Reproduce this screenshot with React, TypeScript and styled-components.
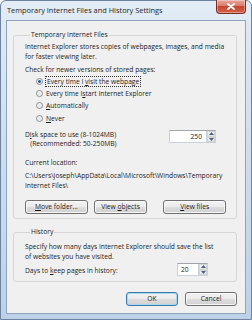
import React from 'react';
import styled, { createGlobalStyle } from 'styled-components';

const Global = createGlobalStyle`
    html, body {
        margin: 0;
        padding: 0;
        background: #ffffff;
    }
    * { box-sizing: border-box; }
`

const Window = styled.div`
    width: 252px;
    height: 320px;
    display: flex;
    flex-direction: column;
    border: 1px solid #6f83a0;
    border-radius: 6px 6px 0 0;
    background: linear-gradient(180deg, #e3ecf6 0%, #d4e2f1 30%, #bcd1e8 100%);
    font-family: "Segoe UI", "Open Sans", "Noto Sans", sans-serif;
    color: #1b1b1b;
`
const TitleBar = styled.div`
    height: 19px;
    display: flex;
    justify-content: space-between;
    align-items: flex-start;
    padding-left: 6px;
`
const Title = styled.div`
    font-size: 7.4px;
    line-height: 19px;
    color: #1e1e1e;
`
const CloseBtn = styled.div`
    width: 30px;
    height: 14px;
    margin-right: 5px;
    margin-top: -1px;
    border: 1px solid #7a2e22;
    border-top: none;
    border-radius: 0 0 4px 4px;
    background: linear-gradient(180deg, #e9a79b 0%, #d77d6c 45%, #c54630 50%, #d4624a 100%);
    display: flex;
    align-items: center;
    justify-content: center;
    box-shadow: inset 0 0 0 1px rgba(255,255,255,0.35);
`
const Client = styled.div`
    flex: 1;
    margin: 0 5px 5px 5px;
    background: #f0f0f0;
    border: 1px solid #8fa3bd;
    padding: 9px 8px 0 6px;
    display: flex;
    flex-direction: column;
`
const Group = styled.fieldset<{ pb: number; mt?: number }>`
    margin: ${p => p.mt || 0}px 0 0 0;
    border: 1px solid #d5d5d5;
    border-radius: 3px;
    padding: 0 10px ${p => p.pb}px 11px;
    min-width: 0;
`
const Legend = styled.legend`
    font-size: 6.7px;
    line-height: 10px;
    padding: 0 1px;
    margin-left: 5px;
`
const Text = styled.div<{ mt?: number; lh?: number }>`
    font-size: 6.7px;
    line-height: ${p => p.lh || 10}px;
    white-space: nowrap;
    margin-top: ${p => p.mt || 0}px;
`
const Radios = styled.div`
    display: flex;
    flex-direction: column;
    margin: 0 0 0 11px;
`
const RadioRow = styled.div`
    display: flex;
    align-items: center;
    height: 12.3px;
    font-size: 6.7px;
    white-space: nowrap;
`
const RadioDot = styled.span<{ checked?: boolean }>`
    width: 7px;
    height: 7px;
    border-radius: 50%;
    border: 1px solid #8a8c8e;
    margin-right: 3px;
    background: ${p => p.checked
        ? 'radial-gradient(circle, #1d4f86 0%, #2f6fb0 35%, #e9eef4 45%, #f7f7f7 100%)'
        : 'radial-gradient(circle, #dfe3e8 0%, #f4f4f4 60%, #ffffff 100%)'};
`
const FocusLabel = styled.span`
    outline: 1px dotted #333;
    padding: 0 1px;
    line-height: 9px;
`
const Row = styled.div<{ mt?: number }>`
    display: flex;
    justify-content: space-between;
    align-items: flex-start;
    margin-top: ${p => p.mt || 0}px;
`
const SpinBox = styled.div<{ w: number; mr: number; mt: number }>`
    width: ${p => p.w}px;
    height: 13px;
    margin-right: ${p => p.mr}px;
    margin-top: ${p => p.mt}px;
    display: flex;
    background: #ffffff;
    border: 1px solid #c9d1da;
    border-top-color: #a3a7ad;
`
const SpinValue = styled.div<{ align: string }>`
    flex: 1;
    font-size: 6.7px;
    line-height: 11px;
    text-align: ${p => p.align};
    padding: 0 4px 0 3px;
`
const SpinArrows = styled.div`
    width: 9px;
    display: flex;
    flex-direction: column;
    border-left: 1px solid #c9d1da;
`
const SpinHalf = styled.div`
    flex: 1;
    display: flex;
    align-items: center;
    justify-content: center;
    background: linear-gradient(180deg, #f6f6f6, #e3e3e3);
    border: 1px solid #d4d4d4;
`
const ButtonRow = styled.div<{ mt: number; justify: string }>`
    display: flex;
    justify-content: ${p => p.justify};
    gap: 6px;
    margin-top: ${p => p.mt}px;
`
const Button = styled.div<{ w: number; ml?: number; primary?: boolean }>`
    width: ${p => p.w}px;
    height: 14px;
    margin-left: ${p => p.ml || 0}px;
    border: 1px solid ${p => p.primary ? '#3d7bad' : '#707070'};
    border-radius: 3px;
    background: linear-gradient(180deg, #f2f2f2 0%, #ebebeb 48%, #dddddd 52%, #cfcfcf 100%);
    box-shadow: inset 0 0 0 1px ${p => p.primary ? '#a7d8f3' : 'rgba(255,255,255,0.8)'};
    font-size: 6.7px;
    line-height: 12px;
    text-align: center;
    white-space: nowrap;
`

const Spin = ({ value, w, mr, mt, align }: { value: string; w: number; mr: number; mt: number; align: string }) => (
    <SpinBox w={w} mr={mr} mt={mt}>
        <SpinValue align={align}>{value}</SpinValue>
        <SpinArrows>
            <SpinHalf>
                <svg width="5" height="3" viewBox="0 0 5 3"><path d="M0 3 L2.5 0 L5 3 Z" fill="#4d6185" /></svg>
            </SpinHalf>
            <SpinHalf>
                <svg width="5" height="3" viewBox="0 0 5 3"><path d="M0 0 L2.5 3 L5 0 Z" fill="#4d6185" /></svg>
            </SpinHalf>
        </SpinArrows>
    </SpinBox>
)

export default function App() {
    return (
        <>
            <Global />
            <Window>
                <TitleBar>
                    <Title>Temporary Internet Files and History Settings</Title>
                    <CloseBtn>
                        <svg width="8" height="7" viewBox="0 0 8 7">
                            <path d="M1 1 L7 6 M7 1 L1 6" stroke="#ffffff" strokeWidth="1.8" strokeLinecap="round" />
                        </svg>
                    </CloseBtn>
                </TitleBar>
                <Client>
                    <Group pb={4}>
                        <Legend>Temporary Internet Files</Legend>
                        <Text mt={2}>Internet Explorer stores copies of webpages, images, and media<br />for faster viewing later.</Text>
                        <Text mt={3}>Check for newer versions of stored pages:</Text>
                        <Radios>
                            <RadioRow><RadioDot checked /><FocusLabel>Every time I <u>v</u>isit the webpage</FocusLabel></RadioRow>
                            <RadioRow><RadioDot />Every time I <u>s</u>tart Internet Explorer</RadioRow>
                            <RadioRow><RadioDot /><u>A</u>utomatically</RadioRow>
                            <RadioRow><RadioDot /><u>N</u>ever</RadioRow>
                        </Radios>
                        <Row mt={6}>
                            <Text lh={9}>D<u>i</u>sk space to use (8-1024MB)<br />&nbsp;&nbsp;&nbsp;(Recommended: 50-250MB)</Text>
                            <Spin value="250" w={47} mr={10} mt={0} align="right" />
                        </Row>
                        <Text mt={10}>Current location:</Text>
                        <Text mt={3}>C:\Users\Joseph\AppData\Local\Microsoft\Windows\Temporary<br />Internet Files\</Text>
                        <ButtonRow mt={9} justify="flex-start">
                            <Button w={63}><u>M</u>ove folder...</Button>
                            <Button w={54}>View <u>o</u>bjects</Button>
                            <Button w={63} ml={10}><u>V</u>iew files</Button>
                        </ButtonRow>
                    </Group>
                    <Group pb={5} mt={8}>
                        <Legend>History</Legend>
                        <Text mt={5}>Specify how many days Internet Explorer should save the list<br />of websites you have visited.</Text>
                        <Row mt={1}>
                            <Text mt={3}>Days to <u>k</u>eep pages in history:</Text>
                            <Spin value="20" w={31} mr={18} mt={0} align="left" />
                        </Row>
                    </Group>
                    <ButtonRow mt={10} justify="flex-end">
                        <Button w={52} primary>OK</Button>
                        <Button w={52} ml={1}>Cancel</Button>
                    </ButtonRow>
                </Client>
            </Window>
        </>
    );
}
